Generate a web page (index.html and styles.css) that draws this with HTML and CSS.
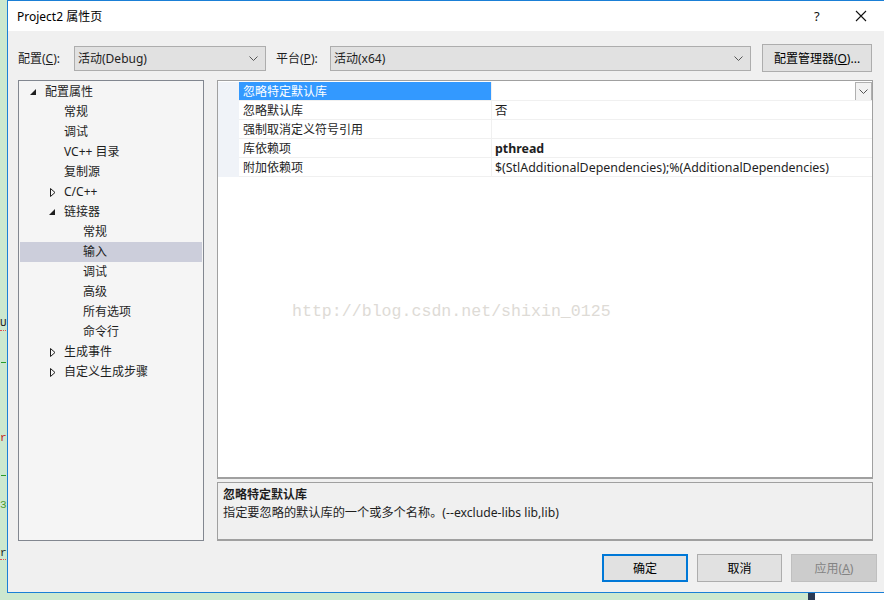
FILE: index.html
```html
<!DOCTYPE html>
<html lang="zh-CN">
<head>
<meta charset="utf-8">
<title>Project2 属性页</title>
<link rel="stylesheet" href="styles.css">
</head>
<body>
<div class="desktop">
  <div class="code-marks">
    <span class="mk mk-u">U</span>
    <span class="mk mk-sq1"></span>
    <span class="mk mk-g1"></span>
    <span class="mk mk-r">r</span>
    <span class="mk mk-g2"></span>
    <span class="mk mk-3">3</span>
    <span class="mk mk-r2">r</span>
    <span class="mk mk-sq2"></span>
  </div>
  <div class="dialog">
    <div class="titlebar">
      <span class="title">Project2 属性页</span>
      <span class="tb-help">?</span>
      <span class="tb-close"><svg width="12" height="12" viewBox="0 0 12 12"><path d="M1 1L11 11M11 1L1 11" stroke="#111" stroke-width="1.1" fill="none"/></svg></span>
    </div>
    <div class="content">
      <div class="config-row">
        <span class="lbl lbl-config">配置(<u>C</u>):</span>
        <div class="combo combo-config"><span>活动(Debug)</span><svg class="chev" width="9" height="6" viewBox="0 0 9 6"><path d="M0.5 0.5L4.5 4.5L8.5 0.5" stroke="#555" fill="none"/></svg></div>
        <span class="lbl lbl-platform">平台(<u>P</u>):</span>
        <div class="combo combo-platform"><span>活动(x64)</span><svg class="chev" width="9" height="6" viewBox="0 0 9 6"><path d="M0.5 0.5L4.5 4.5L8.5 0.5" stroke="#555" fill="none"/></svg></div>
        <div class="btn btn-mgr">配置管理器(<u>O</u>)...</div>
      </div>
      <div class="main">
        <div class="tree">
          <div class="node l0"><svg class="arr" width="6" height="6" viewBox="0 0 6 6"><path d="M6 0L6 6L0 6Z" fill="#1e1e1e"/></svg><span>配置属性</span></div>
          <div class="node l1">常规</div>
          <div class="node l1">调试</div>
          <div class="node l1">VC++ 目录</div>
          <div class="node l1">复制源</div>
          <div class="node l1"><svg class="arr arr-c" width="6" height="9" viewBox="0 0 6 9"><path d="M0.5 0.5L5 4.5L0.5 8.5Z" fill="none" stroke="#1e1e1e"/></svg><span>C/C++</span></div>
          <div class="node l1"><svg class="arr arr-e" width="6" height="6" viewBox="0 0 6 6"><path d="M6 0L6 6L0 6Z" fill="#1e1e1e"/></svg><span>链接器</span></div>
          <div class="node l2">常规</div>
          <div class="node l2 sel">输入</div>
          <div class="node l2">调试</div>
          <div class="node l2">高级</div>
          <div class="node l2">所有选项</div>
          <div class="node l2">命令行</div>
          <div class="node l1"><svg class="arr arr-c" width="6" height="9" viewBox="0 0 6 9"><path d="M0.5 0.5L5 4.5L0.5 8.5Z" fill="none" stroke="#1e1e1e"/></svg><span>生成事件</span></div>
          <div class="node l1"><svg class="arr arr-c" width="6" height="9" viewBox="0 0 6 9"><path d="M0.5 0.5L5 4.5L0.5 8.5Z" fill="none" stroke="#1e1e1e"/></svg><span>自定义生成步骤</span></div>
        </div>
        <div class="right">
          <div class="grid">
            <div class="rows">
              <div class="row sel"><div class="margin"></div><div class="name">忽略特定默认库</div><div class="val"><span></span><span class="dd"><svg width="9" height="6" viewBox="0 0 9 6"><path d="M0.5 0.5L4.5 4.5L8.5 0.5" stroke="#555" fill="none"/></svg></span></div></div>
              <div class="row"><div class="margin"></div><div class="name">忽略默认库</div><div class="val">否</div></div>
              <div class="row"><div class="margin"></div><div class="name">强制取消定义符号引用</div><div class="val"></div></div>
              <div class="row"><div class="margin"></div><div class="name">库依赖项</div><div class="val bold">pthread</div></div>
              <div class="row"><div class="margin"></div><div class="name">附加依赖项</div><div class="val">$(StlAdditionalDependencies);%(AdditionalDependencies)</div></div>
            </div>
            <div class="watermark">http://blog.csdn.net/shixin_0125</div>
          </div>
          <div class="desc">
            <div class="desc-title">忽略特定默认库</div>
            <div class="desc-text">指定要忽略的默认库的一个或多个名称。(--exclude-libs lib,lib)</div>
          </div>
        </div>
      </div>
      <div class="buttons">
        <div class="btn btn-ok">确定</div>
        <div class="btn btn-cancel">取消</div>
        <div class="btn btn-apply disabled">应用(<u>A</u>)</div>
      </div>
    </div>
  </div>
  <div class="below">
    <div class="below-green"></div>
    <div class="below-dark"></div>
    <div class="below-white"></div>
  </div>
</div>
</body>
</html>
```
FILE: styles.css
```css
html, body {
  margin: 0;
  padding: 0;
}
body {
  width: 884px;
  height: 600px;
  overflow: hidden;
  background: #cce8cf;
  font-family: "Noto Sans", "Noto Sans CJK SC", sans-serif;
  font-size: 12px;
  color: #1e1e1e;
}
.desktop {
  position: relative;
  width: 884px;
  height: 600px;
}
.code-marks .mk {
  position: absolute;
  font-family: "Liberation Mono", monospace;
  font-size: 11px;
  line-height: 11px;
}
.mk-u { left: 0; top: 318px; color: #222; }
.mk-sq1 { left: 0; top: 330px; width: 6px; height: 2px; border-top: 1px dotted #e05050; }
.mk-g1 { left: 1px; top: 362px; width: 5px; height: 1px; background: #2a9a2a; }
.mk-r { left: 0; top: 433px; color: #c02020; }
.mk-g2 { left: 1px; top: 475px; width: 5px; height: 1px; background: #2a9a2a; }
.mk-3 { left: 0; top: 500px; color: #4a9a30; }
.mk-r2 { left: 0; top: 548px; color: #222; }
.mk-sq2 { left: 0; top: 559px; width: 6px; height: 2px; border-top: 1px dotted #e05050; }

.dialog {
  position: absolute;
  left: 7px;
  top: 0;
  width: 890px;
  height: 591px;
  border: 1px solid #1a7fd6;
  background: #f0f0f0;
  display: flex;
  flex-direction: column;
}
.titlebar {
  height: 30px;
  background: #ffffff;
  display: flex;
  align-items: center;
  position: relative;
  flex: none;
}
.title {
  margin-left: 9px;
  font-size: 12px;
  color: #000;
}
.tb-help {
  position: absolute;
  left: 806px;
  top: 6px;
  font-size: 13px;
  color: #111;
}
.tb-close {
  position: absolute;
  left: 847px;
  top: 9px;
  width: 12px;
  height: 12px;
  display: flex;
}
.content {
  flex: 1;
  display: flex;
  flex-direction: column;
  padding-left: 10px;
}
.config-row {
  margin-top: 13px;
  height: 28px;
  display: flex;
  align-items: center;
}
.lbl {
  flex: none;
  white-space: nowrap;
}
.lbl-config { width: 56px; }
.lbl-platform { width: 54px; margin-left: 10px; }
.combo {
  flex: none;
  border: 1px solid #adadad;
  background: #e1e1e1;
  display: flex;
  align-items: center;
  justify-content: space-between;
  padding: 0 7px 0 3px;
  box-sizing: border-box;
  height: 25px;
}
.combo-config { width: 192px; }
.combo-platform { width: 421px; }
.chev { margin-top: 1px; }
.btn {
  flex: none;
  border: 1px solid #adadad;
  background: #e1e1e1;
  box-sizing: border-box;
  display: flex;
  align-items: center;
  justify-content: center;
  color: #000;
}
.btn-mgr {
  width: 110px;
  height: 28px;
  margin-left: 11px;
}
.main {
  margin-top: 8px;
  display: flex;
  height: 461px;
}
.tree {
  flex: none;
  width: 186px;
  height: 461px;
  box-sizing: border-box;
  border: 1px solid #828790;
  background: #f5f5f5;
  padding: 1px 1px 0 1px;
}
.node {
  box-sizing: border-box;
  height: 20px;
  line-height: 20px;
  position: relative;
  white-space: nowrap;
  width: 100%;
}
.node.l0 { padding-left: 25px; }
.node.l1 { padding-left: 44px; }
.node.l2 { padding-left: 63px; }
.node.sel { background: #cccedb; }
.node .arr {
  position: absolute;
}
.node.l0 .arr { left: 10px; top: 7px; }
.node.l1 .arr-c { left: 30px; top: 6px; }
.node.l1 .arr-e { left: 29px; top: 7px; }
.right {
  flex: none;
  margin-left: 13px;
  width: 656px;
  display: flex;
  flex-direction: column;
}
.grid {
  height: 399px;
  box-sizing: border-box;
  border: 1px solid #a0a0a0;
  border-bottom-width: 2px;
  background: #ffffff;
  position: relative;
}
.rows {
  padding-top: 1px;
}
.row {
  display: flex;
  height: 19px;
  line-height: 20px;
}
.row .margin {
  width: 21px;
  background: #f0f3f8;
  flex: none;
}
.row .name {
  width: 248px;
  padding-left: 4px;
  border-bottom: 1px solid #f0f0f0;
  border-right: 1px solid #f0f0f0;
  flex: none;
  overflow: hidden;
}
.row .val {
  flex: 1;
  padding-left: 3px;
  border-bottom: 1px solid #f0f0f0;
  display: flex;
  justify-content: space-between;
  font-size: 12.4px;
  overflow: hidden;
}
.row .val.bold { font-weight: bold; }
.row.sel .name {
  background: #3399ff;
  color: #ffffff;
}
.row .dd {
  width: 17px;
  height: 19px;
  box-sizing: border-box;
  border: 1px solid #b0b0b0;
  background: #f2f2f2;
  display: flex;
  align-items: center;
  justify-content: center;
}
.watermark {
  position: absolute;
  left: 74px;
  top: 221px;
  font-family: "Liberation Mono", monospace;
  font-size: 16.6px;
  color: #dedbd6;
  white-space: nowrap;
}
.desc {
  margin-top: 3px;
  height: 59px;
  box-sizing: border-box;
  border: 1px solid #a0a0a0;
  border-bottom-width: 2px;
  background: #f0f0f0;
  padding: 3px 5px;
}
.desc-title {
  font-weight: bold;
  line-height: 18px;
}
.desc-text {
  line-height: 18px;
  font-size: 12.2px;
}
.buttons {
  margin-top: 13px;
  display: flex;
  padding-left: 584px;
}
.buttons .btn {
  width: 86px;
  height: 28px;
}
.btn-ok {
  border: 2px solid #0078d7;
}
.buttons .btn-cancel {
  margin-left: 9px;
  width: 85px;
}
.btn-apply {
  margin-left: 9px;
}
.btn.disabled {
  background: #cccccc;
  border-color: #bfbfbf;
  color: #838383;
}
.below {
  position: absolute;
  left: 0;
  top: 593px;
  width: 884px;
  height: 7px;
  display: flex;
}
.below-green { width: 808px; background: #cce8cf; }
.below-dark { width: 7px; background: #2b3a55; }
.below-white { flex: 1; background: #ffffff; }
```
